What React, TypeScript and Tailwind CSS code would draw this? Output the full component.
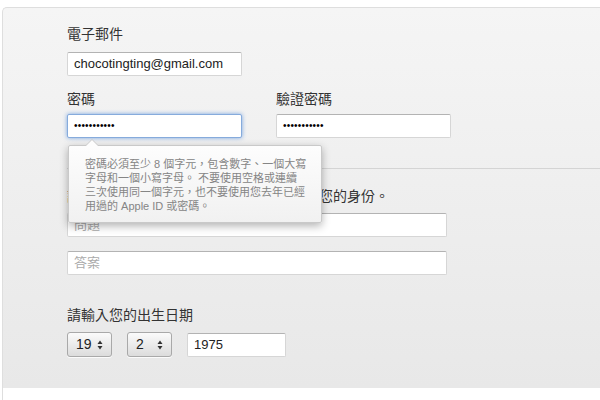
import React from "react";

const cjk = { fontFamily: '"Liberation Sans", "Noto Sans CJK TC", Arial, sans-serif' };

function Label({ children }: { children: React.ReactNode }) {
  return (
    <div className="text-[14px] leading-[16px] text-[#333] whitespace-nowrap" style={cjk}>
      {children}
    </div>
  );
}

function Arrows() {
  return (
    <svg width="6" height="10" viewBox="0 0 6 10" className="shrink-0">
      <path d="M3 0.5 L5.5 4 L0.5 4 Z" fill="#333" />
      <path d="M3 9.5 L5.5 6 L0.5 6 Z" fill="#333" />
    </svg>
  );
}

function Select({ value }: { value: string }) {
  return (
    <div className="w-[45px] h-[25px] flex items-center justify-between pl-[8px] pr-[8px] rounded-[3px] border border-[#a9a9a9] bg-gradient-to-b from-[#fbfbfb] to-[#dcdcdc] shadow-[0_1px_0_rgba(255,255,255,0.8)]">
      <span className="text-[14px] text-[#222]" style={cjk}>{value}</span>
      <Arrows />
    </div>
  );
}

const inputCls =
  "h-[24px] bg-white rounded-[2px] border border-[#d6d6d6] border-t-[#b3b3b3] flex items-center px-[6px] text-[13px] text-[#222]";

export default function App() {
  return (
    <div className="w-[600px] h-[400px] bg-white overflow-hidden pt-[7px] pl-[2px]" style={cjk}>
      <div className="h-[381px] rounded-tl-[5px] border-l border-t border-[#dedede] bg-gradient-to-b from-[#f5f5f5] to-[#e8e8e8] pt-[18px]">
        <div className="pl-[64px]">
          <Label>電子郵件</Label>
          <div className={`${inputCls} w-[175px] mt-[10px]`}>chocotingting@gmail.com</div>

          <div className="flex gap-[34px] mt-[15px]">
            <div className="relative">
              <Label>密碼</Label>
              <div className="w-[175px] h-[24px] mt-[7px] bg-white rounded-[2px] border border-[#86abdc] shadow-[0_0_4px_rgba(80,140,220,0.75)] flex items-center px-[6px]">
                <span className="text-[10px] tracking-[0.2px] text-black leading-none">•••••••••••</span>
              </div>
              {/* tooltip */}
              <div className="absolute left-[1px] top-[54px] z-10 w-[254px] h-[78px] rounded-[2px] border border-[#c9c9c9] bg-gradient-to-b from-[#fdfdfd] to-[#f1f1f1] shadow-[0_3px_8px_rgba(0,0,0,0.3)] pl-[16px] pt-[11px]">
                <div className="absolute -top-[7px] left-[16px] w-0 h-0 border-l-[7px] border-r-[7px] border-b-[7px] border-l-transparent border-r-transparent border-b-[#c9c9c9]" />
                <div className="absolute -top-[6px] left-[17px] w-0 h-0 border-l-[6px] border-r-[6px] border-b-[6px] border-l-transparent border-r-transparent border-b-[#fdfdfd]" />
                <div className="text-[11px] leading-[14px] text-[#858585] whitespace-nowrap" style={cjk}>
                  密碼必須至少 8 個字元，包含數字、一個大寫
                  <br />
                  字母和一個小寫字母。 不要使用空格或連續
                  <br />
                  三次使用同一個字元，也不要使用您去年已經
                  <br />
                  用過的 Apple ID 或密碼。
                </div>
              </div>
            </div>
            <div>
              <Label>驗證密碼</Label>
              <div className={`${inputCls} w-[175px] mt-[7px]`}>
                <span className="text-[10px] tracking-[0.2px] text-black leading-none">•••••••••••</span>
              </div>
            </div>
          </div>
        </div>

        <div className="ml-[64px] mt-[30px] h-px bg-[#d4d4d4]" />

        <div className="pl-[64px] mt-[19px]">
          <Label>請選擇回答安全提示問題，以便我們確認您的身份。</Label>
          <div className={`${inputCls} w-[380px] mt-[9px] text-[#aaa]`}>問題</div>
          <div className={`${inputCls} w-[380px] mt-[14px] text-[#aaa]`}>答案</div>

          <div className="mt-[32px]">
            <Label>請輸入您的出生日期</Label>
          </div>
          <div className="flex items-center gap-[15px] mt-[9px]">
            <Select value="19" />
            <Select value="2" />
            <div className={`${inputCls} w-[99px]`}>1975</div>
          </div>
        </div>
      </div>
      <div className="h-[20px] bg-white border-l border-[#dedede]" />
    </div>
  );
}
